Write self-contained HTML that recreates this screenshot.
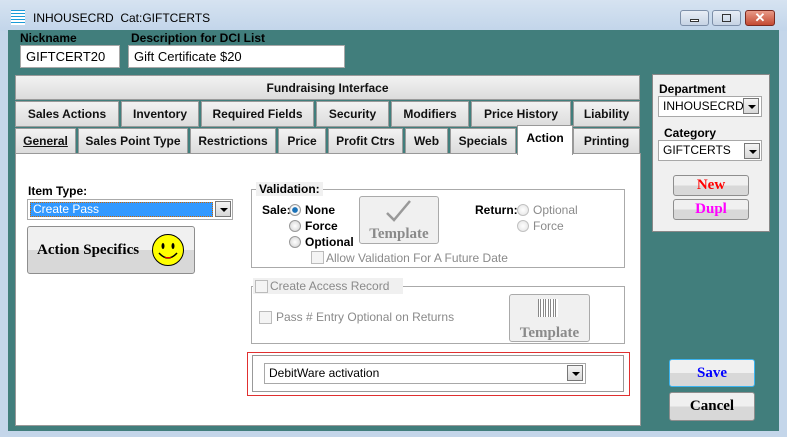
<!DOCTYPE html>
<html><head><style>
*{box-sizing:border-box;margin:0;padding:0}
body{width:787px;height:437px;overflow:hidden;background:#c4d6ea;font-family:"Liberation Sans",Arial,sans-serif;font-size:12px;position:relative}
.a{position:absolute}
.b{font-weight:bold}
.tab{position:absolute;height:26px;border:1px solid #9a9a9a;background:linear-gradient(#f2f2f2,#dcdcdc);font-weight:bold;font-size:12px;text-align:center;line-height:24px;color:#111}
.inp{position:absolute;background:#fff;border:1px solid #a8a8a8;font-size:13px;padding-left:6px}
.dd{position:absolute;width:16px;height:16px;border:1px solid #777;background:linear-gradient(#f4f4f4,#d8d8d8);}
.dd:after{content:"";position:absolute;left:4px;top:6px;border-left:4px solid transparent;border-right:4px solid transparent;border-top:4px solid #000}
.btn{position:absolute;border:1px solid #8e8e8e;border-radius:3px;background:linear-gradient(#f0f0f0 50%,#d8d8d8 50%);font-family:"Liberation Serif",serif;font-weight:bold;text-align:center}
.rad{position:absolute;width:12px;height:12px;border-radius:50%;border:1px solid #999;background:radial-gradient(#fff,#d0d0d0)}
.chk{position:absolute;width:13px;height:13px;border:1px solid #bbb;background:#f4f4f4}
.g{color:#8a8a8a}
</style></head><body>
<!-- title bar -->
<div class="a" style="left:0;top:0;width:787px;height:31px;background:linear-gradient(#d6e3f1,#c2d5ea)"></div>
<div class="a" style="left:11px;top:10px;width:14px;height:15px;background:repeating-linear-gradient(#1a9bd8 0 1px,#fff 1px 3px)"></div>
<div class="a" style="left:33px;top:11px;font-size:12px">INHOUSECRD&nbsp; Cat:GIFTCERTS</div>
<div class="a" style="left:680px;top:10px;width:29px;height:16px;border:1px solid #7d8fa8;border-radius:3px;background:linear-gradient(#e8eef6,#c6d3e4)"><div class="a" style="left:9px;top:8px;width:9px;height:3px;border:1px solid #333;background:#fff"></div></div>
<div class="a" style="left:712px;top:10px;width:29px;height:16px;border:1px solid #7d8fa8;border-radius:3px;background:linear-gradient(#e8eef6,#c6d3e4)"><div class="a" style="left:9px;top:3px;width:9px;height:8px;border:1px solid #333"></div></div>
<div class="a" style="left:745px;top:10px;width:30px;height:16px;border:1px solid #7a2a20;border-radius:3px;background:linear-gradient(#e89a88,#c44a32);color:#fff;font-weight:bold;font-size:13px;text-align:center;line-height:14px">✕</div>
<!-- teal body -->
<div class="a" style="left:8px;top:30px;width:771px;height:401px;background:#417e7c"></div>
<div class="a b" style="left:20px;top:31px;font-size:12px">Nickname</div>
<div class="a b" style="left:131px;top:31px;font-size:12px">Description for DCI List</div>
<div class="inp" style="left:20px;top:45px;width:100px;height:23px;line-height:21px;padding-left:5px">GIFTCERT20</div>
<div class="inp" style="left:128px;top:45px;width:217px;height:23px;line-height:21px;padding-left:5px">Gift Certificate $20</div>
<div class="tab" style="left:15px;top:75px;width:625px;height:25px">Fundraising Interface</div>
<div class="tab" style="left:15px;top:101px;width:104px">Sales Actions</div>
<div class="tab" style="left:121px;top:101px;width:78px">Inventory</div>
<div class="tab" style="left:201px;top:101px;width:113px">Required Fields</div>
<div class="tab" style="left:316px;top:101px;width:73px">Security</div>
<div class="tab" style="left:391px;top:101px;width:78px">Modifiers</div>
<div class="tab" style="left:471px;top:101px;width:100px">Price History</div>
<div class="tab" style="left:573px;top:101px;width:67px">Liability</div>
<div class="tab" style="left:15px;top:128px;width:61px;text-decoration:underline">General</div>
<div class="tab" style="left:78px;top:128px;width:110px">Sales Point Type</div>
<div class="tab" style="left:190px;top:128px;width:86px">Restrictions</div>
<div class="tab" style="left:278px;top:128px;width:48px">Price</div>
<div class="tab" style="left:328px;top:128px;width:75px">Profit Ctrs</div>
<div class="tab" style="left:405px;top:128px;width:43px">Web</div>
<div class="tab" style="left:450px;top:128px;width:66px">Specials</div>
<div class="tab" style="left:573px;top:128px;width:67px">Printing</div>
<div class="a" style="left:15px;top:153px;width:626px;height:273px;background:#fff;border:1px solid #999"></div>
<div class="a b" style="left:517px;top:125px;width:56px;height:30px;background:#fff;border:1px solid #999;border-bottom:none;text-align:center;line-height:24px">Action</div>
<!-- left content -->
<div class="a b" style="left:28px;top:184px">Item Type:</div>
<div class="a" style="left:27px;top:199px;width:206px;height:21px;border:1px solid #aaa;background:#fff"></div>
<div class="a" style="left:30px;top:202px;width:183px;height:15px;background:#3399ff;border:1px dotted #c60;color:#fff;font-size:12px;line-height:13px;padding-left:2px">Create Pass</div>
<div class="dd" style="left:215px;top:201px"></div>
<div class="btn" style="left:27px;top:226px;width:168px;height:48px;font-size:15px;line-height:46px;text-align:left;padding-left:9px">Action Specifics</div>
<svg class="a" style="left:151px;top:233px" width="34" height="34"><circle cx="17" cy="17" r="15.5" fill="#ff0" stroke="#000"/><ellipse cx="12" cy="13" rx="1.5" ry="3"/><ellipse cx="22" cy="13" rx="1.5" ry="3"/><path d="M8 20 Q17 30 26 20" fill="none" stroke="#000" stroke-width="1.5"/><path d="M13 24 Q17 27 21 24" fill="#e00"/></svg>
<!-- validation -->
<div class="a" style="left:251px;top:189px;width:374px;height:79px;border:1px solid #aaa"></div>
<div class="a b" style="left:256px;top:182px;background:#f0f0f0;padding:0 3px">Validation:</div>
<div class="a b" style="left:262px;top:203px">Sale:</div>
<div class="rad" style="left:289px;top:204px;background:radial-gradient(#1b72b8 35%,#fff 45%,#d0d0d0)"></div>
<div class="a b" style="left:305px;top:203px">None</div>
<div class="rad" style="left:289px;top:220px"></div><div class="a b" style="left:305px;top:219px">Force</div>
<div class="rad" style="left:289px;top:236px"></div><div class="a b" style="left:305px;top:235px">Optional</div>
<div class="chk" style="left:311px;top:251px"></div><div class="a g" style="left:326px;top:251px">Allow Validation For A Future Date</div>
<div class="btn g" style="left:359px;top:196px;width:80px;height:48px;background:#f0f0f0;border-color:#aaa;font-size:15px;padding-top:29px;line-height:16px">Template</div>
<svg class="a" style="left:385px;top:199px" width="28" height="24"><path d="M2 14 L9 21 L25 2" fill="none" stroke="#999" stroke-width="2.5"/></svg>
<div class="a b" style="left:475px;top:203px">Return:</div>
<div class="rad" style="left:517px;top:204px;opacity:.6"></div><div class="a g" style="left:533px;top:203px">Optional</div>
<div class="rad" style="left:517px;top:220px;opacity:.6"></div><div class="a g" style="left:533px;top:219px">Force</div>
<!-- access -->
<div class="a" style="left:251px;top:286px;width:374px;height:58px;border:1px solid #aaa"></div>
<div class="a" style="left:253px;top:278px;width:150px;height:16px;background:#f0f0f0"></div>
<div class="chk" style="left:255px;top:280px"></div><div class="a g" style="left:270px;top:279px">Create Access Record</div>
<div class="chk" style="left:259px;top:311px"></div><div class="a g" style="left:276px;top:310px">Pass # Entry Optional on Returns</div>
<div class="btn g" style="left:509px;top:294px;width:81px;height:48px;background:#f0f0f0;border-color:#aaa;font-size:15px;padding-top:30px;line-height:16px">Template</div>
<div class="a" style="left:538px;top:299px;width:20px;height:18px;background:repeating-linear-gradient(90deg,#888 0 1px,#fff 1px 2px,#888 2px 3px,#fff 3px 5px)"></div>
<!-- red box -->
<div class="a" style="left:247px;top:352px;width:383px;height:44px;border:1px solid #e03030"></div>
<div class="a" style="left:252px;top:355px;width:372px;height:37px;border:1px solid #999"></div>
<div class="inp" style="left:264px;top:363px;width:322px;height:21px;line-height:19px;font-size:12px;padding-left:4px">DebitWare activation</div>
<div class="dd" style="left:567px;top:365px"></div>
<!-- right panel -->
<div class="a" style="left:652px;top:74px;width:118px;height:158px;background:#f0f0f0;border:1px solid #888"></div>
<div class="a b" style="left:659px;top:82px">Department</div>
<div class="inp" style="left:658px;top:96px;width:104px;height:21px;line-height:19px;font-size:12px;padding-left:4px;overflow:hidden;white-space:nowrap">INHOUSECRD</div>
<div class="dd" style="left:743px;top:98px"></div>
<div class="a b" style="left:664px;top:126px">Category</div>
<div class="inp" style="left:658px;top:140px;width:104px;height:21px;line-height:19px;font-size:12px;padding-left:4px">GIFTCERTS</div>
<div class="dd" style="left:744px;top:143px"></div>
<div class="btn" style="left:673px;top:175px;width:76px;height:21px;color:#f00;font-size:15px;line-height:19px">New</div>
<div class="btn" style="left:673px;top:199px;width:76px;height:21px;color:#f0f;font-size:15px;line-height:19px">Dupl</div>
<div class="btn" style="left:669px;top:359px;width:86px;height:28px;color:#00f;font-size:15px;line-height:26px;border-color:#3cb4f0">Save</div>
<div class="btn" style="left:669px;top:392px;width:86px;height:29px;color:#000;font-size:15px;line-height:27px">Cancel</div>
</body></html>
